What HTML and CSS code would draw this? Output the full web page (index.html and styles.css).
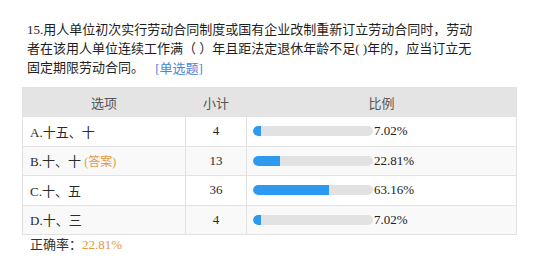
FILE: index.html
```html
<!DOCTYPE html>
<html lang="zh">
<head>
<meta charset="utf-8">
<link rel="stylesheet" href="styles.css">
</head>
<body>
<div class="wrap">
  <div class="question">15.用人单位初次实行劳动合同制度或国有企业改制重新订立劳动合同时，劳动者在该用人单位连续工作满（ ）年且距法定退休年龄不足( )年的，应当订立无固定期限劳动合同。 <span class="qtype">[单选题]</span></div>
  <table class="stats">
    <thead>
      <tr><th class="c-opt">选项</th><th class="c-num">小计</th><th class="c-pct">比例</th></tr>
    </thead>
    <tbody>
      <tr><td class="opt">A.十五、十</td><td class="num">4</td><td class="pct"><div class="pcell"><div class="bar"><div class="fill" style="width:7.02%"></div></div><span class="pv">7.02%</span></div></td></tr>
      <tr class="alt"><td class="opt">B.十、十 <span class="ans">(答案)</span></td><td class="num">13</td><td class="pct"><div class="pcell"><div class="bar"><div class="fill" style="width:22.81%"></div></div><span class="pv">22.81%</span></div></td></tr>
      <tr><td class="opt">C.十、五</td><td class="num">36</td><td class="pct"><div class="pcell"><div class="bar"><div class="fill" style="width:63.16%"></div></div><span class="pv">63.16%</span></div></td></tr>
      <tr class="alt"><td class="opt">D.十、三</td><td class="num">4</td><td class="pct"><div class="pcell"><div class="bar"><div class="fill" style="width:7.02%"></div></div><span class="pv">7.02%</span></div></td></tr>
    </tbody>
  </table>
  <div class="rate">正确率：<span class="rv">22.81%</span></div>
</div>
</body>
</html>
```
FILE: styles.css
```css
html, body {
  margin: 0;
  padding: 0;
  background: #ffffff;
}
body {
  font-family: "Liberation Serif", "Noto Sans CJK SC", serif;
  font-size: 13px;
  color: #222;
}
.wrap {
  padding: 20px 0 0 22px;
}
.question {
  width: 452px;
  padding-left: 5px;
  line-height: 19px;
  color: #1e1e1e;
}
.qtype {
  display: inline-block;
  line-height: 16px;
  vertical-align: middle;
  color: #4a86d8;
  margin-left: 8px;
}
.stats {
  margin-top: 10px;
  width: 491px;
  border-collapse: collapse;
  table-layout: fixed;
  font-size: 13px;
}
.stats th, .stats td {
  border: 1px solid #e2e2e2;
  padding: 0;
}
.stats th {
  background: #e4e4e4;
  color: #555;
  font-weight: normal;
  height: 28px;
  text-align: center;
}
.stats td {
  height: 28.5px;
  color: #2a2a2a;
}
.c-opt { width: 162px; }
.c-num { width: 60px; }
.c-pct { width: 269px; }
.stats tr.alt td {
  background: #f9f9f9;
}
.opt {
  padding-left: 7px !important;
}
.ans {
  color: #e0993f;
  font-size: 12px;
}
.num {
  text-align: center;
}
.pct {
  padding-left: 6px !important;
}
.pcell {
  display: flex;
  align-items: center;
  gap: 1px;
}
.bar {
  width: 120px;
  height: 10px;
  border-radius: 5px;
  background: #e2e2e2;
  overflow: hidden;
}
.fill {
  height: 100%;
  background: #2b9af0;
  border-radius: 5px 0 0 5px;
}
.pv {
  color: #222;
}
.rate {
  line-height: 20px;
  padding-left: 8px;
  color: #333;
}
.rv {
  color: #e0993f;
}
```
